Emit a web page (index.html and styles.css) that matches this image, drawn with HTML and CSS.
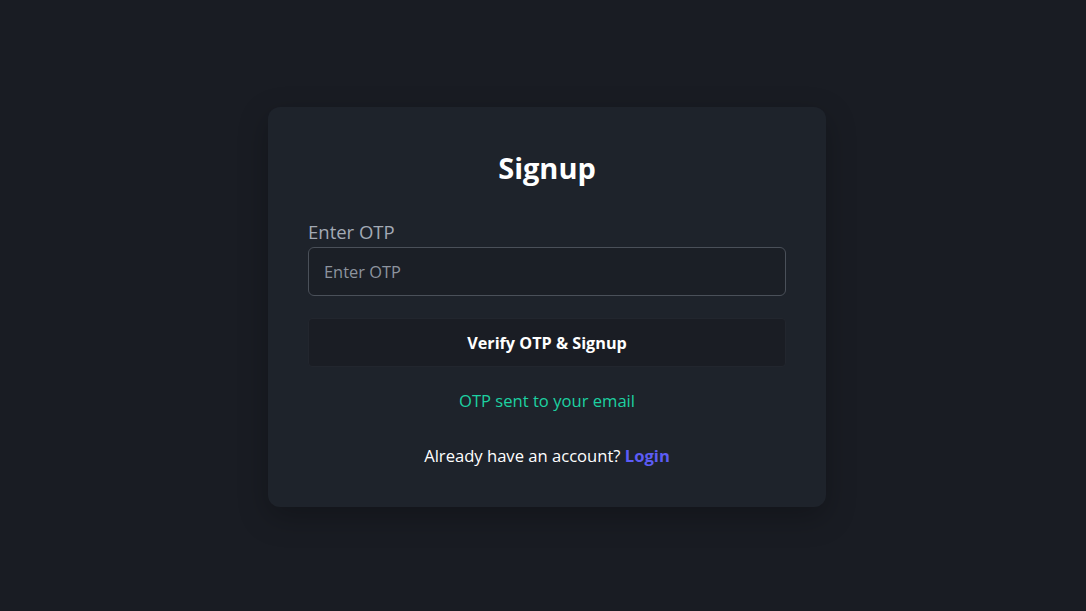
FILE: index.html
```html
<!DOCTYPE html>
<html lang="en">
<head>
<meta charset="utf-8">
<title>Signup</title>
<link rel="stylesheet" href="styles.css">
</head>
<body>
<main class="page">
  <section class="card">
    <h1 class="title">Signup</h1>
    <form class="form">
      <label class="label" for="otp">Enter OTP</label>
      <input class="input" id="otp" type="text" placeholder="Enter OTP">
      <button class="btn" type="button">Verify OTP &amp; Signup</button>
    </form>
    <p class="status">OTP sent to your email</p>
    <p class="switch">Already have an account? <a class="link" href="#">Login</a></p>
  </section>
</main>
</body>
</html>
```
FILE: styles.css
```css
* { box-sizing: border-box; }
html, body { margin: 0; height: 100%; }
body {
  background: #191c23;
  font-family: "Open Sans", "Noto Sans", sans-serif;
  color: #ffffff;
}
.page {
  height: 100%;
  display: flex;
  align-items: center;
  justify-content: center;
  padding-left: 8px;
  padding-top: 3px;
}
.card {
  width: 558px;
  height: 400px;
  background: #1e232b;
  border-radius: 12px;
  padding: 41px 40px 40px;
  box-shadow: 0 10px 30px rgba(0, 0, 0, 0.25);
  display: flex;
  flex-direction: column;
}
.title {
  margin: 0;
  text-align: center;
  font-size: 29px;
  font-weight: 700;
  line-height: 40px;
  color: #ffffff;
}
.form {
  display: flex;
  flex-direction: column;
  margin-top: 33px;
}
.label {
  font-size: 18.5px;
  color: #a3aab5;
  line-height: 22px;
  margin-bottom: 4px;
}
.input {
  height: 49px;
  background: #1b1f26;
  border: 1px solid #4a5059;
  border-radius: 6px;
  padding: 0 15px;
  font-family: inherit;
  font-size: 16.4px;
  color: #ffffff;
  outline: none;
}
.input::placeholder { color: #8d949e; }
.btn {
  margin-top: 22px;
  height: 49px;
  background: #1a1d24;
  border: 1px solid #22262e;
  border-radius: 4px;
  font-family: inherit;
  font-size: 16.2px;
  font-weight: 700;
  color: #ffffff;
}
.status {
  margin: 23px 0 0;
  text-align: center;
  font-size: 16.6px;
  line-height: 22px;
  color: #1dd1a1;
}
.switch {
  margin: 33px 0 0;
  text-align: center;
  font-size: 16.6px;
  line-height: 22px;
  color: #ffffff;
}
.link {
  color: #5c5cf5;
  font-weight: 700;
  text-decoration: none;
}
```
